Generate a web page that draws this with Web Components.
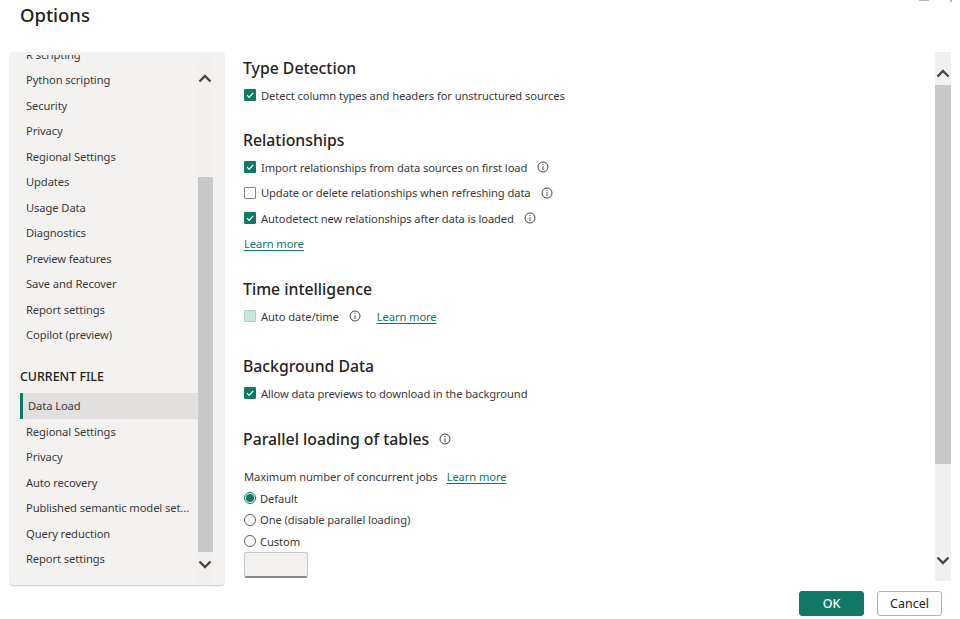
<!DOCTYPE html>
<html>
<head>
<meta charset="utf-8">
<title>Options</title>
<style>
  html, body { margin: 0; height: 100%; overflow: hidden; background: #fff; }
  body { font-family: "Noto Sans", "Liberation Sans", sans-serif; color: #323130; }
</style>
</head>
<body>
<options-dialog>
  <options-nav slot="nav">
    <nav-item>R scripting</nav-item>
    <nav-item>Python scripting</nav-item>
    <nav-item>Security</nav-item>
    <nav-item>Privacy</nav-item>
    <nav-item>Regional Settings</nav-item>
    <nav-item>Updates</nav-item>
    <nav-item>Usage Data</nav-item>
    <nav-item>Diagnostics</nav-item>
    <nav-item>Preview features</nav-item>
    <nav-item>Save and Recover</nav-item>
    <nav-item>Report settings</nav-item>
    <nav-item>Copilot (preview)</nav-item>
    <nav-heading>CURRENT FILE</nav-heading>
    <nav-item selected>Data Load</nav-item>
    <nav-item>Regional Settings</nav-item>
    <nav-item>Privacy</nav-item>
    <nav-item>Auto recovery</nav-item>
    <nav-item>Published semantic model set...</nav-item>
    <nav-item>Query reduction</nav-item>
    <nav-item>Report settings</nav-item>
  </options-nav>

  <options-panel slot="panel">
    <panel-heading>Type Detection</panel-heading>
    <panel-row><check-box checked></check-box>Detect column types and headers for unstructured sources</panel-row>

    <panel-heading style="--top:20px">Relationships</panel-heading>
    <panel-row><check-box checked></check-box>Import relationships from data sources on first load<info-icon></info-icon></panel-row>
    <panel-row><check-box></check-box>Update or delete relationships when refreshing data<info-icon></info-icon></panel-row>
    <panel-row><check-box checked></check-box>Autodetect new relationships after data is loaded<info-icon></info-icon></panel-row>
    <panel-row><learn-more style="margin-left:1px">Learn more</learn-more></panel-row>

    <panel-heading style="--top:20.500px">Time intelligence</panel-heading>
    <panel-row><check-box dimmed></check-box>Auto date/time<info-icon></info-icon><learn-more style="margin-left:16px">Learn more</learn-more></panel-row>

    <panel-heading style="--top:25px">Background Data</panel-heading>
    <panel-row><check-box checked></check-box>Allow data previews to download in the background</panel-row>

    <panel-heading style="--top:21px">Parallel loading of tables<info-icon></info-icon></panel-heading>
    <panel-row style="margin:12.750px 0 -2px;padding-left:1px">Maximum number of concurrent jobs<learn-more style="margin-left:9px">Learn more</learn-more></panel-row>
    <panel-row tight><radio-dot checked></radio-dot>Default</panel-row>
    <panel-row tight><radio-dot></radio-dot>One (disable parallel loading)</panel-row>
    <panel-row tight><radio-dot></radio-dot>Custom</panel-row>
    <number-box></number-box>
  </options-panel>

  <dialog-button slot="actions" primary>OK</dialog-button>
  <dialog-button slot="actions">Cancel</dialog-button>
</options-dialog>

<script>
/********************************* OptionsDialog ******************************************/
let dialogTmpl = document.createElement('template');
dialogTmpl.innerHTML = `
  <style>
    :host { display: flex; flex-direction: column; width: 960px; height: 619px; position: relative; overflow: hidden; }
    header { height: 52px; flex: none; box-sizing: border-box; padding: 2px 0 0 20px; font-size: 18.500px; line-height: 26px; font-weight: 500; color: #201f1e; }
    .body { display: flex; height: 533px; flex: none; padding-left: 10px; }
    footer { display: flex; justify-content: flex-end; gap: 13px; padding: 6px 18px 0 0; }
    .chrome { position: absolute; top: 0; height: 1px; background: #b5b5b5; }
  </style>
  <header>Options</header>
  <div class="body">
    <slot name="nav"></slot>
    <slot name="panel"></slot>
  </div>
  <footer><slot name="actions"></slot></footer>
  <div class="chrome" style="left:919px;width:10px"></div>
  <div class="chrome" style="left:950px;width:2px;height:2px"></div>`;
class OptionsDialog extends HTMLElement {
  constructor() {
    super();
    this.attachShadow({ mode: 'open' });
    this.shadowRoot.appendChild(dialogTmpl.content.cloneNode(true));
  }
}
customElements.define('options-dialog', OptionsDialog);

/********************************* ScrollRail ******************************************/
let railTmpl = document.createElement('template');
railTmpl.innerHTML = `
  <style>
    :host { display: flex; flex-direction: column; width: var(--rail-width, 16px); flex: none; background: var(--rail-bg, #f0f0f0); }
    .btn { height: 33px; flex: none; display: flex; justify-content: center; }
    .btn svg { display: block; margin-left: var(--arrow-shift, 0); }
    .up svg { margin-top: 17px; }
    .down svg { margin-top: 8px; }
    .gap { flex: none; }
    .thumb { flex: none; background: #c8c8c8; }
    .rest { flex: 1; }
  </style>
  <div class="btn up"><svg width="14" height="9" viewBox="0 0 14 9"><path d="M1.500 7.500 7 2l5.500 5.500" fill="none" stroke="#484644" stroke-width="2.400"/></svg></div>
  <div class="gap"></div>
  <div class="thumb"></div>
  <div class="rest"></div>
  <div class="btn down"><svg width="14" height="9" viewBox="0 0 14 9"><path d="M1.500 1.500 7 7l5.500-5.500" fill="none" stroke="#484644" stroke-width="2.400"/></svg></div>`;
class ScrollRail extends HTMLElement {
  constructor() {
    super();
    this.attachShadow({ mode: 'open' });
    this.shadowRoot.appendChild(railTmpl.content.cloneNode(true));
  }

  connectedCallback() {
    this.shadowRoot.querySelector('.gap').style.height = (this.getAttribute('gap') || 0) + 'px';
    this.shadowRoot.querySelector('.thumb').style.height = (this.getAttribute('thumb') || 0) + 'px';
  }
}
customElements.define('scroll-rail', ScrollRail);

/********************************* OptionsNav ******************************************/
let navTmpl = document.createElement('template');
navTmpl.innerHTML = `
  <style>
    :host { display: flex; width: 214px; height: 533px; flex: none; box-sizing: border-box; padding: 3px 11px 0 0; background: #f3f2f1; border-radius: 3px; box-shadow: 0 1px 2px rgba(0,0,0,.22); }
    .clip { flex: 1; min-width: 0; overflow: hidden; padding-left: 10px; }
    .list { margin-top: -13.250px; }
    scroll-rail { --rail-bg: #f1f0ef; --rail-width: 15px; --arrow-shift: -1px; height: 528px; margin-top: 2px; }
  </style>
  <div class="clip"><div class="list"><slot></slot></div></div>
  <scroll-rail gap="87" thumb="375"></scroll-rail>`;
class OptionsNav extends HTMLElement {
  constructor() {
    super();
    this.attachShadow({ mode: 'open' });
    this.shadowRoot.appendChild(navTmpl.content.cloneNode(true));
  }
}
customElements.define('options-nav', OptionsNav);

/********************************* NavItem ******************************************/
let navItemTmpl = document.createElement('template');
navItemTmpl.innerHTML = `
  <style>
    :host { display: block; height: 25.500px; line-height: 25.500px; box-sizing: border-box; padding-left: 6px; font-size: 11.200px; letter-spacing: -0.100px; color: #3b3a39; white-space: nowrap; overflow: hidden; }
    :host([selected]) { background: #e1e0df; border-left: 3px solid #117865; padding-left: 5px; }
  </style>
  <slot></slot>`;
class NavItem extends HTMLElement {
  constructor() {
    super();
    this.attachShadow({ mode: 'open' });
    this.shadowRoot.appendChild(navItemTmpl.content.cloneNode(true));
  }
}
customElements.define('nav-item', NavItem);

let navHeadingTmpl = document.createElement('template');
navHeadingTmpl.innerHTML = `
  <style>
    :host { display: block; height: 18px; line-height: 18px; margin: 20px 0 7.500px; font-size: 12.400px; font-weight: 500; color: #201f1e; }
  </style>
  <slot></slot>`;
class NavHeading extends HTMLElement {
  constructor() {
    super();
    this.attachShadow({ mode: 'open' });
    this.shadowRoot.appendChild(navHeadingTmpl.content.cloneNode(true));
  }
}
customElements.define('nav-heading', NavHeading);

/********************************* OptionsPanel ******************************************/
let panelTmpl = document.createElement('template');
panelTmpl.innerHTML = `
  <style>
    :host { display: flex; flex: 1; min-width: 0; margin-left: 19px; height: 529px; }
    .content { flex: 1; min-width: 0; padding-top: 4px; }
    scroll-rail { margin: 0 9px 0 0; height: 529px; }
  </style>
  <div class="content"><slot></slot></div>
  <scroll-rail gap="0" thumb="379"></scroll-rail>`;
class OptionsPanel extends HTMLElement {
  constructor() {
    super();
    this.attachShadow({ mode: 'open' });
    this.shadowRoot.appendChild(panelTmpl.content.cloneNode(true));
  }
}
customElements.define('options-panel', OptionsPanel);

let panelHeadingTmpl = document.createElement('template');
panelHeadingTmpl.innerHTML = `
  <style>
    :host { display: flex; align-items: center; height: 24px; margin: var(--top, 0) 0 2.500px; font-size: 15.800px; line-height: 24px; font-weight: 500; color: #252423; white-space: nowrap; }
    ::slotted(info-icon) { margin-left: 10px; }
  </style>
  <slot></slot>`;
class PanelHeading extends HTMLElement {
  constructor() {
    super();
    this.attachShadow({ mode: 'open' });
    this.shadowRoot.appendChild(panelHeadingTmpl.content.cloneNode(true));
  }
}
customElements.define('panel-heading', PanelHeading);

let panelRowTmpl = document.createElement('template');
panelRowTmpl.innerHTML = `
  <style>
    :host { display: flex; align-items: center; height: 25.500px; font-size: 11.200px; letter-spacing: -0.100px; color: #3b3a39; white-space: nowrap; }
    :host([tight]) { height: 21.500px; }
  </style>
  <slot></slot>`;
class PanelRow extends HTMLElement {
  constructor() {
    super();
    this.attachShadow({ mode: 'open' });
    this.shadowRoot.appendChild(panelRowTmpl.content.cloneNode(true));
  }
}
customElements.define('panel-row', PanelRow);

/********************************* Controls ******************************************/
let checkTmpl = document.createElement('template');
checkTmpl.innerHTML = `
  <style>
    :host { display: block; flex: none; width: 12px; height: 12px; margin: 0 5px 0 1px; box-sizing: border-box; border: 1px solid #8a8886; border-radius: 1px; background: #fff; }
    :host([checked]) { background: #117865; border-color: #117865; }
    :host([dimmed]) { background: #cde6dc; border-color: #a9d3c3; }
    svg { display: none; }
    :host([checked]) svg { display: block; }
  </style>
  <svg width="10" height="10" viewBox="0 0 10 10"><path d="M2 5.200 4.100 7.300 8.200 2.800" fill="none" stroke="#fff" stroke-width="1.200"/></svg>`;
class CheckBox extends HTMLElement {
  constructor() {
    super();
    this.attachShadow({ mode: 'open' });
    this.shadowRoot.appendChild(checkTmpl.content.cloneNode(true));
  }
}
customElements.define('check-box', CheckBox);

let radioTmpl = document.createElement('template');
radioTmpl.innerHTML = `
  <style>
    :host { display: flex; align-items: center; justify-content: center; flex: none; width: 12px; height: 12px; margin: 0 4px 0 1px; box-sizing: border-box; border: 1px solid #605e5c; border-radius: 50%; background: #fff; }
    :host([checked]) { border-color: #117865; }
    :host([checked])::before { content: ""; width: 8px; height: 8px; border-radius: 50%; background: #117865; }
  </style>`;
class RadioDot extends HTMLElement {
  constructor() {
    super();
    this.attachShadow({ mode: 'open' });
    this.shadowRoot.appendChild(radioTmpl.content.cloneNode(true));
  }
}
customElements.define('radio-dot', RadioDot);

let infoTmpl = document.createElement('template');
infoTmpl.innerHTML = `
  <style>
    :host { display: block; flex: none; width: 12px; height: 12px; margin-left: 10px; }
    svg { display: block; }
  </style>
  <svg width="12" height="12" viewBox="0 0 12 12"><circle cx="6" cy="6" r="5" fill="none" stroke="#484644" stroke-width="1"/><path d="M6 5.200V9" stroke="#484644" stroke-width="1"/><path d="M6 3v1" stroke="#484644" stroke-width="1"/></svg>`;
class InfoIcon extends HTMLElement {
  constructor() {
    super();
    this.attachShadow({ mode: 'open' });
    this.shadowRoot.appendChild(infoTmpl.content.cloneNode(true));
  }
}
customElements.define('info-icon', InfoIcon);

let learnTmpl = document.createElement('template');
learnTmpl.innerHTML = `
  <style>
    :host { display: inline-block; color: #117865; font-size: 11.200px; letter-spacing: -0.100px; text-decoration: underline; text-underline-offset: 2px; }
  </style>
  <slot></slot>`;
class LearnMore extends HTMLElement {
  constructor() {
    super();
    this.attachShadow({ mode: 'open' });
    this.shadowRoot.appendChild(learnTmpl.content.cloneNode(true));
  }
}
customElements.define('learn-more', LearnMore);

let numberTmpl = document.createElement('template');
numberTmpl.innerHTML = `
  <style>
    :host { display: block; width: 64px; height: 26px; margin: 0 0 0 1px; box-sizing: border-box; background: #f3f2f1; border: 1px solid #c8c6c4; border-bottom: 2px solid #8a8886; border-radius: 3px; }
  </style>`;
class NumberBox extends HTMLElement {
  constructor() {
    super();
    this.attachShadow({ mode: 'open' });
    this.shadowRoot.appendChild(numberTmpl.content.cloneNode(true));
  }
}
customElements.define('number-box', NumberBox);

let buttonTmpl = document.createElement('template');
buttonTmpl.innerHTML = `
  <style>
    :host { display: flex; align-items: center; justify-content: center; width: 65px; height: 25px; box-sizing: border-box; background: #fff; border: 1px solid #b3b0ad; border-radius: 3px; font-size: 12.500px; color: #252423; }
    :host([primary]) { background: #117865; border-color: #117865; color: #fff; font-weight: 500; }
  </style>
  <slot></slot>`;
class DialogButton extends HTMLElement {
  constructor() {
    super();
    this.attachShadow({ mode: 'open' });
    this.shadowRoot.appendChild(buttonTmpl.content.cloneNode(true));
  }
}
customElements.define('dialog-button', DialogButton);
</script>
</body>
</html>
